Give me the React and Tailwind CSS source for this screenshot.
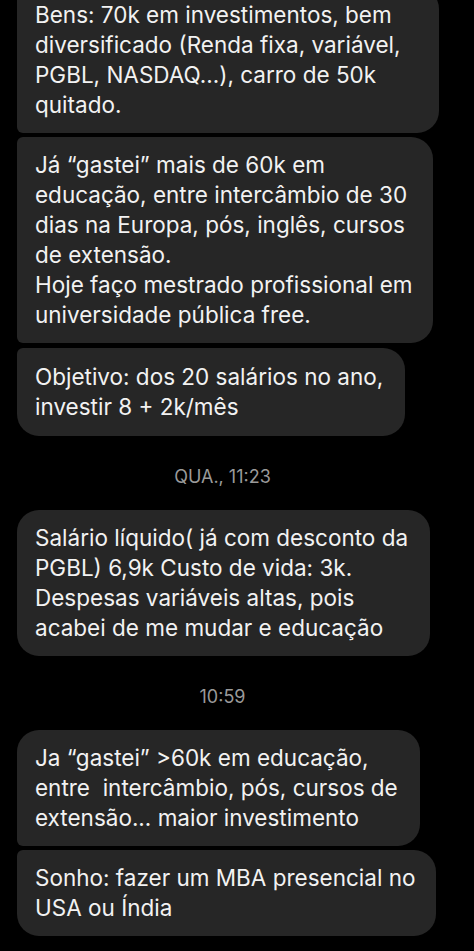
import React from 'react';

const messages = [
  {
    lines: ['Bens: 70k em investimentos, bem', 'diversificado (Renda fixa, variável,', 'PGBL, NASDAQ...), carro de 50k', 'quitado.'],
    width: 'w-[422px]',
    corners: 'rounded-r-[22px] rounded-tl-[6px] rounded-bl-[6px]',
  },
  {
    lines: [
      'Já “gastei” mais de 60k em',
      'educação, entre intercâmbio de 30',
      'dias na Europa, pós, inglês, cursos',
      'de extensão.',
      'Hoje faço mestrado profissional em',
      'universidade pública free.',
    ],
    width: 'w-[416px]',
    corners: 'rounded-r-[22px] rounded-tl-[6px] rounded-bl-[6px]',
    gap: 'mt-[4px]',
  },
  {
    lines: ['Objetivo: dos 20 salários no ano,', 'investir 8 + 2k/mês'],
    width: 'w-[388px]',
    corners: 'rounded-r-[22px] rounded-tl-[6px] rounded-bl-[22px]',
    gap: 'mt-[5px]',
    pad: 'py-[14px]',
  },
  { time: 'QUA., 11:23' },
  {
    lines: ['Salário líquido( já com desconto da', 'PGBL) 6,9k Custo de vida: 3k.', 'Despesas variáveis altas, pois', 'acabei de me mudar e educação'],
    width: 'w-[413px]',
    corners: 'rounded-[22px]',
  },
  { time: '10:59' },
  {
    lines: ['Ja “gastei” >60k em educação,', 'entre\u00a0 intercâmbio, pós, cursos de', 'extensão... maior investimento'],
    width: 'w-[403px]',
    corners: 'rounded-r-[22px] rounded-tl-[22px] rounded-bl-[6px]',
  },
  {
    lines: ['Sonho: fazer um MBA presencial no', 'USA ou Índia'],
    width: 'w-[419px]',
    corners: 'rounded-r-[22px] rounded-tl-[6px] rounded-bl-[22px]',
    gap: 'mt-[4px]',
  },
];

const Bubble = ({ lines, width, corners, gap, pad }) => (
  <div className={`${width} ${corners} ${gap || ''} ${pad || 'py-[13px]'} bg-[#262626] pl-[18px] pr-[20px]`}>
    {lines.map((l, i) => (
      <div key={i} className="whitespace-nowrap text-[22.5px] leading-[30px] text-[#f2f2f2]">
        {l}
      </div>
    ))}
  </div>
);

const Stamp = ({ text }) => (
  <div className="pr-[46px] pt-[31px] pb-[23px] text-center text-[18px] leading-[20px] text-[#9a9a9a]">
    {text}
  </div>
);

export default function App() {
  return (
    <div className="h-[951px] w-[474px] overflow-hidden bg-black" style={{ fontFamily: 'Inter, "Liberation Sans", sans-serif' }}>
      <div className="-mt-[13px] flex flex-col pl-[17px]">
        {messages.map((m, i) =>
          m.time ? <Stamp key={i} text={m.time} /> : <Bubble key={i} {...m} />
        )}
      </div>
    </div>
  );
}
